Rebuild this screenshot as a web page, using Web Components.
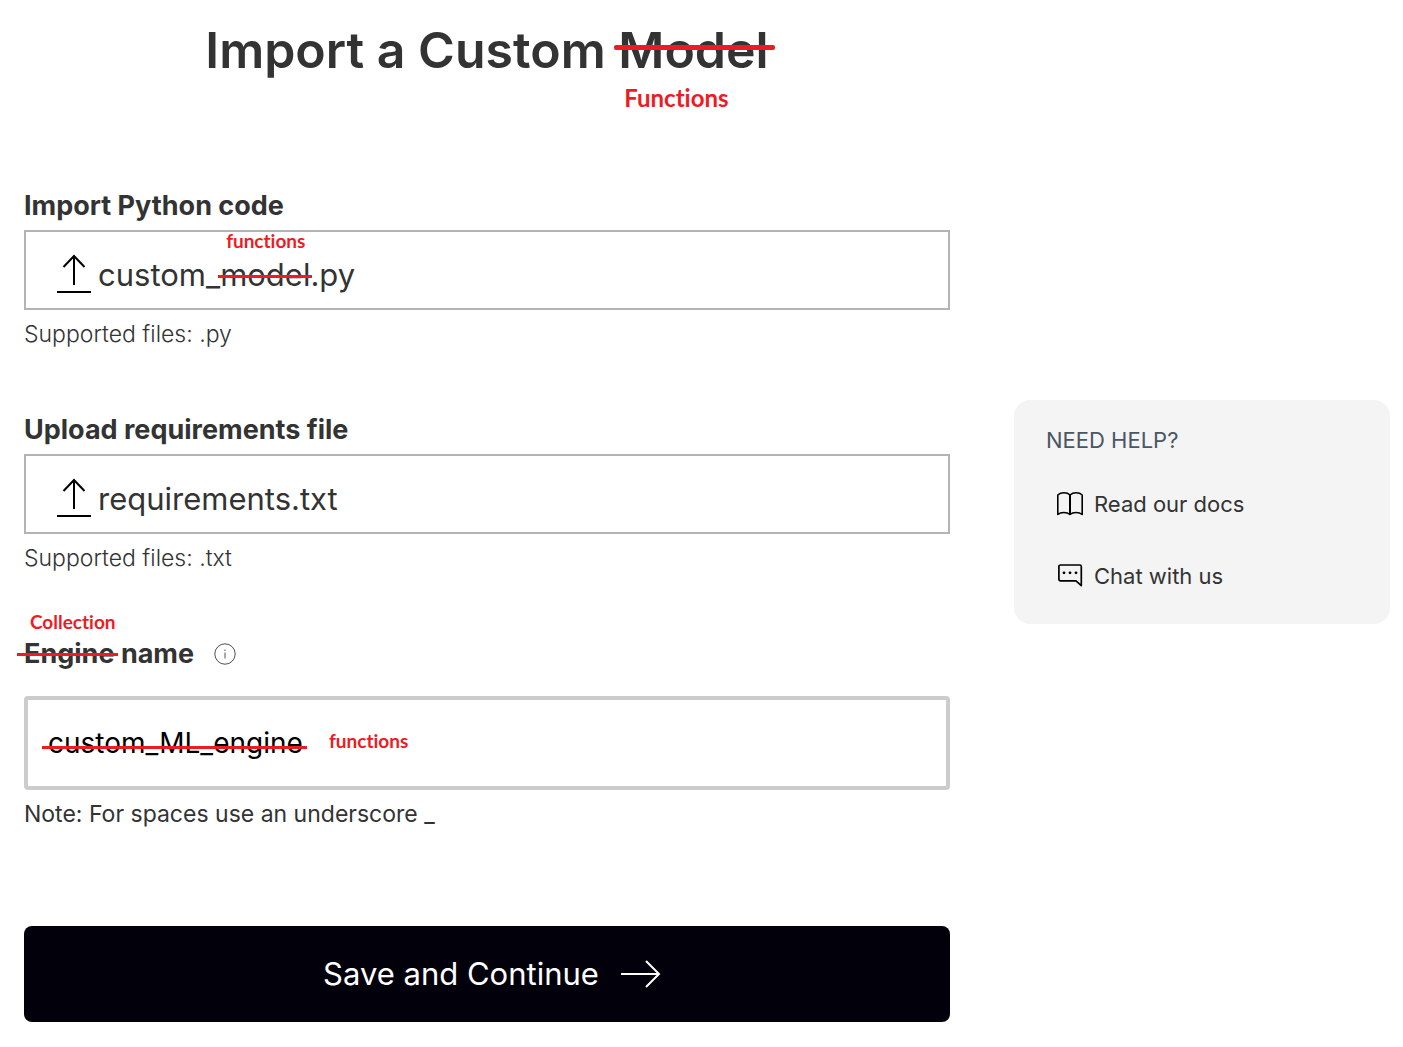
<!DOCTYPE html>
<html lang="en">
<head>
<meta charset="utf-8">
<meta name="viewport" content="width=device-width, initial-scale=1">
<title>Import a Custom Model</title>
<style>
  body { margin: 0; background: #fff; color: #333; font-family: Inter, "Liberation Sans", sans-serif; }
</style>
</head>
<body>
<import-page></import-page>

<script>
const define = (name, html, setup) => {
  const template = document.createElement('template');
  template.innerHTML = html;
  customElements.define(name, class extends HTMLElement {
    constructor() {
      super();
      this.attachShadow({ mode: 'open' }).append(template.content.cloneNode(true));
    }
    connectedCallback() { if (setup) setup(this.shadowRoot, this); }
  });
};

/* Red correction label */
define('review-note', `
  <style>
    :host { display: block; color: #ed1c24; font: 700 19px/20px Lato, "Open Sans", sans-serif; font-variant-ligatures: none; white-space: nowrap; }
    :host([large]) { font-size: 24px; line-height: 24px; }
  </style>
  <slot></slot>`);

/* Crossed-out words with a replacement placed above or below them */
define('review-strike', `
  <style>
    :host { display: inline-block; position: relative; }
    del { text-decoration: none; }
    .line { position: absolute; left: -2px; right: -2px; top: 50%; height: 3px; background: #ed1c24; }
    ::slotted(review-note) { position: absolute; left: 6px; bottom: 100%; }
    :host([kind=title]) .line { left: -4px; right: -6px; height: 5px; margin-top: -5px; border-radius: 2px; }
    :host([kind=title]) ::slotted(review-note) { bottom: auto; top: 68px; }
    :host([kind=file]) ::slotted(review-note) { bottom: 44px; }
    :host([kind=label]) .line { left: -7px; right: -4px; margin-top: -1px; }
    :host([kind=label]) ::slotted(review-note) { bottom: 46px; }
  </style>
  <del><slot></slot></del><span class="line"></span><slot name="note"></slot>`);

define('file-field', `
  <style>
    :host { display: block; }
    .title { display: block; font-size: 27px; line-height: 48px; font-weight: 700; }
    .box { display: flex; align-items: center; gap: 6px; box-sizing: border-box; height: 80px; padding: 10px 30px 0; border: 2px solid #b3b3b3; font-size: 31px; line-height: 40px; cursor: pointer; }
    svg { flex: none; width: 36px; height: 44px; margin-bottom: 6px; }
    input { position: absolute; width: 1px; height: 1px; opacity: 0; }
    .hint { margin: 0; font-size: 23px; line-height: 48px; font-weight: 300; }
  </style>
  <label class="title" for="file"></label>
  <input id="file" type="file">
  <label class="box" for="file">
    <svg viewBox="0 0 36 44" fill="none" stroke="#000" stroke-width="2" aria-hidden="true"><path d="M18 35V6M7.500 17 18 6l10.500 11M1 42h34"/></svg>
    <span><slot></slot></span>
  </label>
  <p class="hint"></p>`, (root, host) => {
    root.querySelector('.title').textContent = host.getAttribute('label');
    root.querySelector('.hint').textContent = host.getAttribute('hint');
    root.querySelector('input').accept = host.getAttribute('accept');
  });

define('name-field', `
  <style>
    :host { display: block; }
    .head { display: flex; align-items: center; gap: 20px; height: 48px; margin-bottom: 18px; font-size: 27px; line-height: 48px; font-weight: 700; }
    svg { display: block; width: 22px; height: 22px; }
    .control { position: relative; }
    input { display: block; box-sizing: border-box; width: 100%; height: 94px; padding: 0 20px; border: 4px solid #ccc; border-radius: 4px; background: #fff; color: #000; font: 400 28px/36px Inter, sans-serif; outline: none; }
    .line { position: absolute; left: 18px; top: 50px; width: 265px; height: 3px; background: #ed1c24; }
    .control review-note { position: absolute; left: 305px; top: 35px; }
    .hint { margin: 0; font-size: 23px; line-height: 48px; }
  </style>
  <div class="head">
    <label for="name"><review-strike kind="label">Engine<review-note slot="note">Collection</review-note></review-strike> name</label>
    <svg viewBox="0 0 22 22" fill="none" stroke="#4b4f58" aria-hidden="true"><circle cx="11" cy="11" r="10.200"/><path d="M11 9.500v6M11 6.500v1.600" stroke-width="1.300" stroke="#777b83"/></svg>
  </div>
  <div class="control">
    <input id="name" type="text" value="custom_ML_engine" spellcheck="false">
    <span class="line"></span>
    <review-note>functions</review-note>
  </div>
  <p class="hint">Note: For spaces use an underscore _</p>`);

define('save-button', `
  <style>
    :host { display: block; }
    button { display: flex; align-items: center; justify-content: center; gap: 22px; width: 100%; height: 96px; padding: 0 0 0 10px; border: 0; border-radius: 8px; background: #02000b; color: #fff; font: 400 31px/40px Inter, sans-serif; cursor: pointer; }
    svg { width: 40px; height: 28px; }
  </style>
  <button type="submit"><span><slot></slot></span><svg viewBox="0 0 40 28" fill="none" stroke="#fff" stroke-width="2" aria-hidden="true"><path d="M0 14h38M25 1l13 13-13 13"/></svg></button>`);

define('help-panel', `
  <style>
    :host { display: block; border-radius: 16px; background: #f4f4f4; padding: 20px 32px 8px; box-sizing: border-box; }
    h2 { margin: 0 0 12px; font-size: 22px; line-height: 40px; font-weight: 400; color: #4b5563; }
    nav { display: flex; flex-direction: column; }
    a { display: flex; align-items: center; gap: 10px; height: 64px; padding-left: 10px; margin-bottom: 8px; font-size: 22px; line-height: 28px; color: #333; text-decoration: none; }
    svg { flex: none; width: 28px; height: 28px; }
  </style>
  <h2>NEED HELP?</h2>
  <nav>
    <a href="#docs"><svg viewBox="0 0 28 28" fill="none" stroke="#000" stroke-width="1.600" stroke-linejoin="round" aria-hidden="true"><path d="M14 5v20" stroke-width="2"/><path d="M14 5c-3-3-9-3-12.200 0v19.500c3-2.600 9-2.600 12.200 0 3-2.600 9-2.600 12.200 0V5c-3-3-9-3-12.200 0"/></svg><span>Read our docs</span></a>
    <a href="#chat"><svg viewBox="0 0 28 28" aria-hidden="true"><path d="M4.500 3h19.200a1.600 1.600 0 0 1 1.600 1.600v19l-5.300-4.800H4.500a1.600 1.600 0 0 1-1.600-1.600V4.600a1.600 1.600 0 0 1 1.600-1.600z" fill="none" stroke="#000" stroke-width="1.700" stroke-linejoin="round"/><g fill="#000"><circle cx="8" cy="10.800" r="1.400"/><circle cx="14" cy="10.800" r="1.400"/><circle cx="20" cy="10.800" r="1.400"/></g></svg><span>Chat with us</span></a>
  </nav>`);

define('import-page', `
  <style>
    :host { display: grid; grid-template-columns: minmax(0, 1fr) 376px; gap: 64px; align-items: center; padding: 0 13px 0 24px; }
    main { padding: 18px 0 2px; }
    h1 { margin: 0 0 100px; font-size: 50px; line-height: 64px; font-weight: 600; text-align: center; }
    form { display: flex; flex-direction: column; gap: 48px; }
    save-button { margin-top: 40px; }
  </style>
  <main>
    <h1>Import a Custom <review-strike kind="title">Model<review-note slot="note" large>Functions</review-note></review-strike></h1>
    <form>
      <file-field label="Import Python code" hint="Supported files: .py" accept=".py">custom_<review-strike kind="file">model<review-note slot="note">functions</review-note></review-strike>.py</file-field>
      <file-field label="Upload requirements file" hint="Supported files: .txt" accept=".txt">requirements.txt</file-field>
      <name-field></name-field>
      <save-button>Save and Continue</save-button>
    </form>
  </main>
  <help-panel></help-panel>`);
</script>
</body>
</html>
